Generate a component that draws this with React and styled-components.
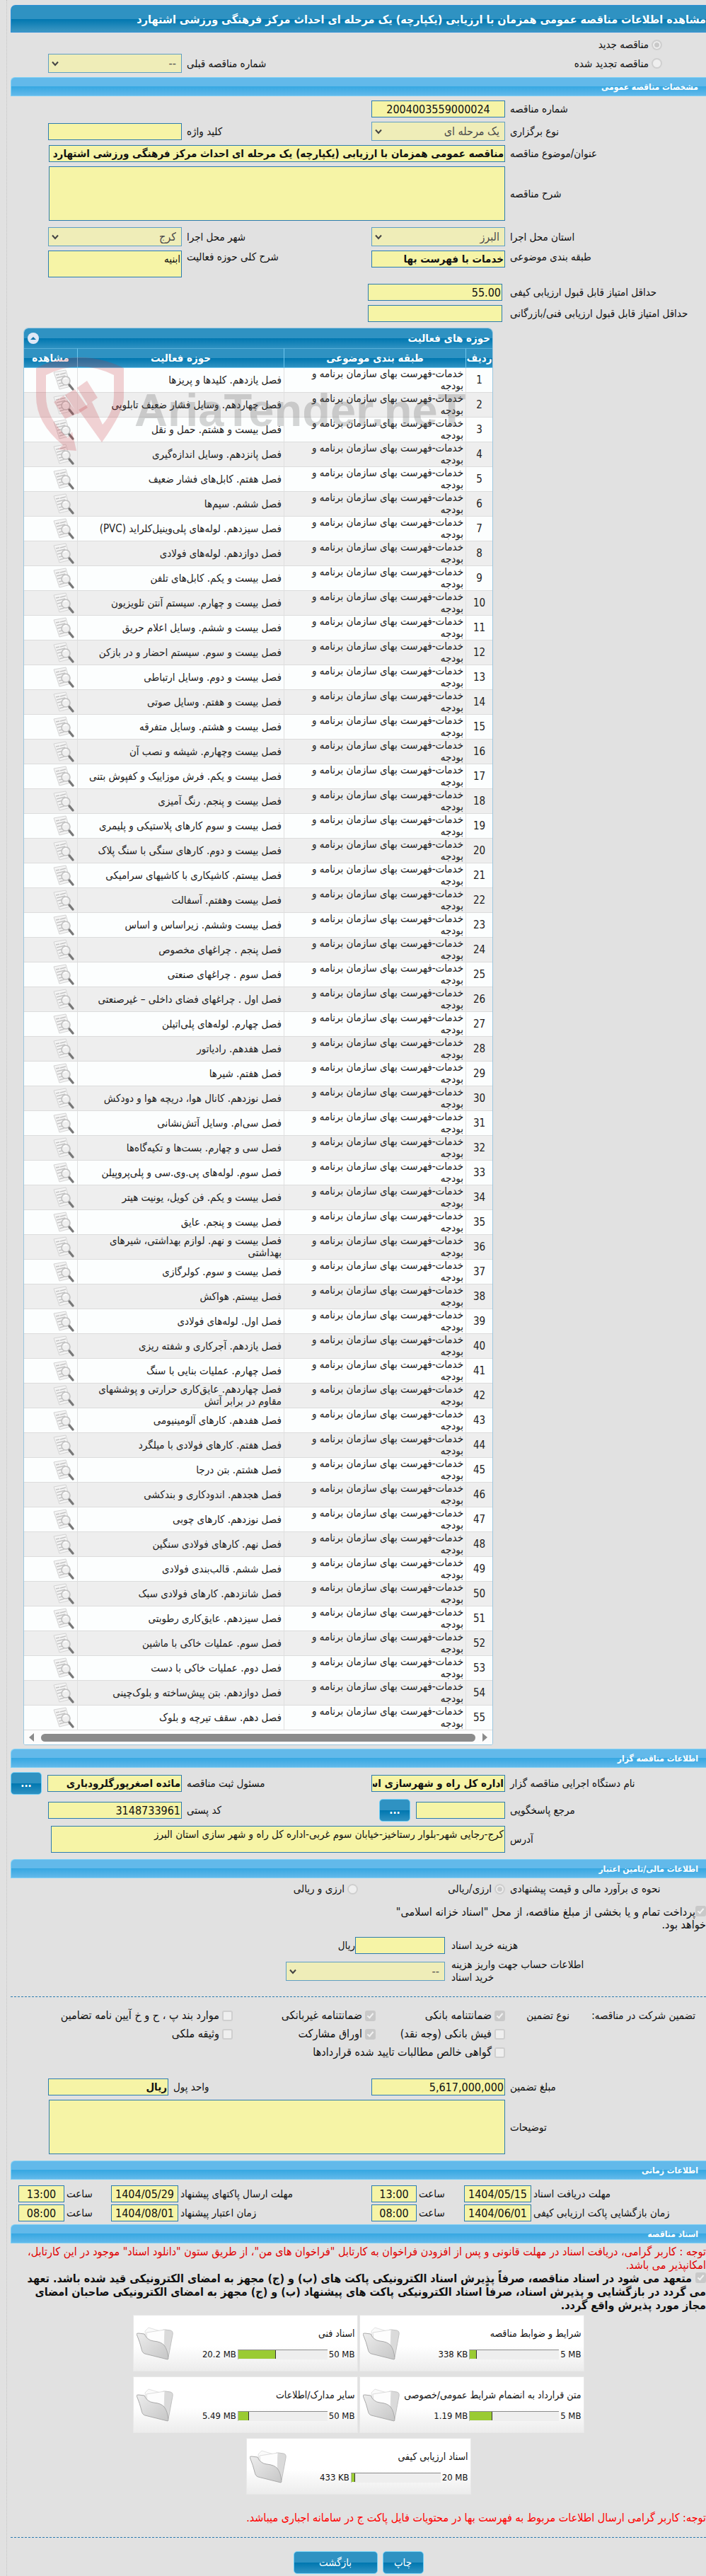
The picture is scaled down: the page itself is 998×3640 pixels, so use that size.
import React from 'react';
import styled, { createGlobalStyle, css } from 'styled-components';

const Global = createGlobalStyle`
  *, *::before, *::after { box-sizing: border-box; }
  body {
    margin: 0;
    background: #e1e1e1;
    color: #111;
    font: 15px/18px "DejaVu Sans Condensed", "DejaVu Sans", Tahoma, sans-serif;
  }
  input, select, textarea, button { font-family: inherit; margin: 0; }
`;

const Page = styled.main`
  direction: rtl;
  margin-left: 9px;
  padding: 7px 0 5px 5px;
  border-left: 1px dotted #c4c4c4;
  overflow: hidden;
`;

const TitleBar = styled.h1`
  margin: 0 0 8px;
  height: 39px;
  font-size: 16px;
  line-height: 39px;
  white-space: nowrap;
  color: #fff;
  border: 1px solid #2f8fd6;
  border-right: 0;
  border-top-left-radius: 7px;
  background: linear-gradient(#2f92c2 0 50%, #0077b0 51%, #3d97c3);
`;

const SectionBar = styled.h2`
  margin: 0 0 ${(p) => p.$after ?? 6}px;
  padding: 0 11px;
  height: 27px;
  font-size: 12px;
  line-height: 27px;
  color: #fff;
  border: 1px solid #7fd0f5;
  border-right: 0;
  border-top-left-radius: 6px;
  background: linear-gradient(#62b9ea 0 48%, #37a8e2 50%, #62b9ea);
`;

const Stack = styled.div`
  display: flex;
  flex-direction: column;
  gap: ${(p) => p.$gap ?? 6}px;
  padding-top: ${(p) => p.$before ?? 0}px;
  padding-bottom: ${(p) => p.$after ?? 0}px;
`;

const Row = styled.div`
  display: grid;
  grid-template-columns: 277px 189px 1fr ${(p) => p.$second ?? '189px'};
  column-gap: 7px;
  align-items: ${(p) => p.$align ?? 'center'};
  padding-left: ${(p) => p.$end ?? 53}px;
`;

const WideRow = styled.div`
  display: grid;
  grid-template-columns: 277px 1fr;
  column-gap: 7px;
  align-items: center;
  padding: 0 0 ${(p) => p.$after ?? 0}px ${(p) => p.$end ?? 54}px;
`;

const ScoreRow = styled.div`
  display: grid;
  grid-template-columns: 277px 190px;
  column-gap: 11px;
  align-items: center;
`;

const Label = styled.label`
  text-align: left;
  white-space: nowrap;
`;

const field = css`
  width: 100%;
  border: 1px solid #2c7cb0;
  border-radius: 0;
  background: #f6f4a6;
  color: #111;
  outline: 0;
`;

const Input = styled.input`
  ${field}
  height: 24px;
  padding: 0 1px;
  font-size: ${(p) => (p.$bold ? 15 : 16)}px;
  font-weight: ${(p) => (p.$bold ? 700 : 400)};
  text-align: ${(p) => p.$align ?? 'right'};
`;

const RefInput = styled(Input)`
  width: 126px;
`;

const Area = styled.textarea`
  ${field}
  display: block;
  height: ${(p) => p.$h}px;
  padding: 2px 1px;
  resize: none;
  overflow: hidden;
  font-size: 15px;
  line-height: 18px;
`;

const SelectBox = styled.span`
  position: relative;
  display: block;
  svg { position: absolute; left: 5px; top: 10px; pointer-events: none; }
`;

const NativeSelect = styled.select`
  ${field}
  display: block;
  appearance: none;
  height: 27px;
  padding: 0 7px 0 20px;
  font-size: 16px;
  color: #4c4c4c;
  opacity: 1;
  border-color: #5f9fc4;
  background: #efedb8;
`;

function Select({ id, value }) {
  return (
    <SelectBox>
      <NativeSelect id={id} disabled defaultValue={value}>
        <option>{value}</option>
      </NativeSelect>
      <svg width="10" height="8" viewBox="0 0 10 8">
        <path d="M1 1.5 5 6 9 1.5" fill="none" stroke="#444" strokeWidth="2" />
      </svg>
    </SelectBox>
  );
}

const Radio = styled.input.attrs({ type: 'radio', disabled: true })`
  appearance: none;
  flex: none;
  width: 15px;
  height: 15px;
  border: 2px solid #cfcfcf;
  border-radius: 50%;
  background: #efefef;
  &:checked { background: #c9c9c9; box-shadow: inset 0 0 0 2px #efefef; }
`;

const Tick = styled.input.attrs({ type: 'checkbox', disabled: true })`
  appearance: none;
  flex: none;
  width: 15px;
  height: 15px;
  border: 2px solid #cfcfcf;
  border-radius: 3px;
  background: #efefef;
  vertical-align: -1px;
  &:checked { background: #c9c9c9; border-color: #c9c9c9; }
  &:checked::after {
    content: "";
    display: block;
    width: 5px;
    height: 9px;
    margin-right: 3px;
    border: solid #f2f2f2;
    border-width: 0 2px 2px 0;
    transform: rotate(40deg);
  }
`;

const Choice = styled.label`
  display: flex;
  align-items: center;
  gap: 4px;
  padding-right: ${(p) => p.$indent ?? 0}px;
  white-space: nowrap;
`;

const panelBlue = 'linear-gradient(#2f92c2 0 49%, #0077b0 51%, #2f92c2)';

const GridPanel = styled.section`
  position: relative;
  margin: 8px 301px 5px 18px;
  border: 1px solid #9cc7df;
  border-radius: 7px 7px 3px 3px;
  background: #fcfefe;
  overflow: hidden;
`;

const GridHead = styled.header`
  display: flex;
  justify-content: space-between;
  align-items: center;
  height: 28px;
  padding: 0 3px 0 5px;
  background: ${panelBlue};
  color: #fff;
  font-weight: 700;
`;

const Collapse = styled.button`
  width: 16px;
  height: 16px;
  padding: 0;
  border: 0;
  border-radius: 50%;
  background: #dfe8f6;
  svg { display: block; }
`;

const Grid = styled.table`
  width: 100%;
  table-layout: fixed;
  border-collapse: separate;
  border-spacing: 0;
  line-height: 17px;
  color: #222;
  th {
    height: 28px;
    padding: 0;
    color: #fff;
    border-bottom: 1px solid #6cc6ee;
    border-top: 1px solid #58aed8;
    background: ${panelBlue};
    white-space: nowrap;
  }
  th + th { border-right: 1px solid #6cc6ee; }
  td {
    height: 35px;
    padding: 0 3px;
    border-bottom: 1px solid #dcdcdc;
    vertical-align: middle;
  }
  td + td { border-right: 1px solid #e0e0e0; }
  td:first-child { text-align: center; }
  td:nth-child(2) { padding-left: 24px; }
  td:nth-child(3) { padding-left: 14px; }
  tbody tr:nth-child(even) { background: #eee; }
  svg { display: block; }
`;

const Scroll = styled.div`
  display: flex;
  align-items: center;
  gap: 10px;
  height: 20px;
  padding: 0 7px;
  background: #fcfcfc;
`;

const Thumb = styled.div`
  flex: 1;
  height: 11px;
  border-radius: 6px;
  background: #8b8b8b;
`;

const Watermark = styled.svg`
  position: absolute;
  left: 17px;
  top: 36px;
  pointer-events: none;
`;

const BlueButton = styled.button`
  flex: none;
  width: ${(p) => p.$w}px;
  height: 32px;
  padding: 0;
  border: 1px solid #6fd0f8;
  border-radius: 5px;
  background: ${panelBlue};
  color: #fff;
  font-size: 15px;
  font-weight: ${(p) => (p.$bold ? 700 : 400)};
`;

const WithButton = styled.span`
  display: flex;
  align-items: center;
  gap: 8px;
`;

const Estimate = styled.div`
  display: grid;
  grid-template-columns: 277px 201px auto;
  column-gap: 7px;
  justify-content: start;
  align-items: center;
`;

const Payment = styled.div`
  width: 460px;
  padding: 15px 0 8px;
  font-size: 16px;
`;

const FeeRow = styled.div`
  display: grid;
  grid-template-columns: 212px ${(p) => p.$w}px auto;
  justify-content: start;
  align-items: center;
  padding-right: 157px;
`;

const FeeLabel = styled.label`
  padding-left: 9px;
  text-align: left;
`;

const Dashed = styled.hr`
  height: 0;
  margin: ${(p) => p.$m};
  border: 0;
  border-top: 1px dashed #2c7cb0;
`;

const Guarantee = styled.div`
  display: grid;
  grid-template-columns: 178px 91px 183px 202px auto;
  justify-content: start;
  row-gap: 8px;
  padding-right: 15px;
  white-space: nowrap;
  label { font-size: 16px; }
`;

const Times = styled.div`
  display: grid;
  grid-template-columns: 244px 95px 61px 64px 1fr 95px 60px 65px;
  gap: 3px;
  align-items: center;
  padding: 2px 0 4px 11px;
`;

const Notice = styled.p`
  margin: 0;
  font-size: 16px;
  line-height: 19px;
  color: ${(p) => p.$color ?? '#111'};
  font-weight: ${(p) => (p.$bold ? 700 : 400)};
`;

const Cards = styled.div`
  display: flex;
  flex-wrap: wrap;
  justify-content: center;
  gap: 7px 2px;
  max-width: 650px;
  margin: 4px auto 23px;
`;

const Card = styled.article`
  display: flex;
  align-items: flex-start;
  width: 318px;
  height: 80px;
  padding: 16px 3px 0 4px;
  border: 1px solid #e8e8e8;
  background: linear-gradient(#fff 55%, #ececec);
  font-size: 14px;
  line-height: 18px;
`;

const CardBody = styled.div`
  flex: 1;
  display: flex;
  flex-direction: column;
  gap: 13px;
  white-space: nowrap;
`;

const Meter = styled.div`
  display: flex;
  align-items: center;
  gap: 2px;
  font-size: 13px;
  line-height: 15px;
`;

const Track = styled.div`
  direction: ltr;
  width: 127px;
  height: 14px;
  border-top: 1px solid #8c8c8c;
  border-left: 1px solid #b5b5b5;
  background: #eee;
`;

const Fill = styled.div`
  height: 12px;
  border-right: 1px solid #333;
  background: #9acb33;
`;

const Actions = styled.div`
  display: flex;
  justify-content: center;
  gap: 7px;
`;

function Dots() {
  return <BlueButton type="button" $w={44} $bold>...</BlueButton>;
}

function ViewIcon() {
  return (
    <svg width="31" height="31" viewBox="0 0 31 31">
      <path d="M1 4 18 1l7 23-16 4Q5 15 1 4Z" fill="#f4f4f4" stroke="#d4d4d4" />
      <path d="m4 8 5-1m1 0 8-2M5 12l12-3M6 16l8-2M8 20l6-1M9 24l7-2" stroke="#c4c4c4" strokeWidth="1.4" />
      <circle cx="18" cy="16" r="6" fill="#eee" fillOpacity=".8" stroke="#c2c2c2" strokeWidth="1.6" />
      <path d="M15 14q2-3 5-1" stroke="#fff" strokeWidth="1.5" fill="none" />
      <path d="m23 22 5 6" stroke="#777" strokeWidth="3.4" strokeLinecap="round" />
    </svg>
  );
}

function FolderIcon() {
  return (
    <svg width="54" height="50" viewBox="0 0 54 50">
      <defs>
        <linearGradient id="folder" x1="0" y1="0" x2="1" y2="1">
          <stop offset="0" stopColor="#ededed" />
          <stop offset="1" stopColor="#c6c6c6" />
        </linearGradient>
      </defs>
      <path d="M33 7q4-4 8-3l7 1q4 1 3 6l-6 32-8-8Z" fill="#dadada" stroke="#c2c2c2" />
      <path d="M12 6 17 1l20 6-3 24-20-6Z" fill="#fafafa" stroke="#e2e2e2" />
      <path d="M14 8 40 4l-1 24-23 2Z" fill="#fdfdfd" stroke="#ddd" />
      <path d="M0 10q0-1 3-1l8 1q4 9 13 10 11 1 15 6 5 6 6 19l-1 1L12 38q-4-1-5-7Q5 22 0 10Z" fill="url(#folder)" stroke="#aaa" />
    </svg>
  );
}

function Shield() {
  return (
    <Watermark width="620" height="142" viewBox="0 0 620 142">
      <g fill="#c7323c" fillOpacity=".22">
        <path fillRule="evenodd" d="M0 20Q62-10 124 20V62q0 20-31 63L60 79 79 68l15 32q16-18 16-42V30Q62 6 14 30v30q0 30 31 59l6-9 6 27-26-2 7-6Q0 98 0 60Z" />
        <path d="m58 48 14-10 15 24-14 10ZM41 58l14-8 18 26-14 9Z" />
        <path d="m25 68 14-9 20 25-18 8Z" />
      </g>
      <text x="139" y="102" direction="ltr" fontFamily="'Liberation Sans', Arial, sans-serif" fontWeight="700" fontSize="65" fill="#555" fillOpacity=".24">AriaTender.neT</text>
    </Watermark>
  );
}

const chapters = [
  'فصل یازدهم. کلیدها و پریزها', 'فصل چهاردهم. وسایل فشار ضعیف تابلویی', 'فصل بیست و هشتم. حمل و نقل',
  'فصل پانزدهم. وسایل اندازه‌گیری', 'فصل هفتم. کابل‌های فشار ضعیف', 'فصل ششم. سیم‌ها',
  'فصل سیزدهم. لوله‌های پلی‌وینیل‌کلراید (PVC)', 'فصل دوازدهم. لوله‌های فولادی', 'فصل بیست و یکم. کابل‌های تلفن',
  'فصل بیست و چهارم. سیستم آنتن تلویزیون', 'فصل بیست و ششم. وسایل اعلام حریق', 'فصل بیست و سوم. سیستم احضار و در بازکن',
  'فصل بیست و دوم. وسایل ارتباطی', 'فصل بیست و هفتم. وسایل صوتی', 'فصل بیست و هشتم. وسایل متفرقه',
  'فصل بیست وچهارم. شیشه و نصب آن', 'فصل بیست و یکم. فرش موزاییک و کفپوش بتنی', 'فصل بیست و پنجم. رنگ آمیزی',
  'فصل بیست و سوم کارهای پلاستیکی و پلیمری', 'فصل بیست و دوم. کارهای سنگی با سنگ پلاک', 'فصل بیستم. کاشیکاری با کاشیهای سرامیکی',
  'فصل بیست وهفتم. آسفالت', 'فصل بیست وششم. زیراساس و اساس', 'فصل پنجم . چراغهای مخصوص',
  'فصل سوم . چراغهای صنعتی', 'فصل اول . چراغهای فضای داخلی – غیرصنعتی', 'فصل چهارم. لوله‌های پلی‌اتیلن',
  'فصل هفدهم. رادیاتور', 'فصل هفتم. شیرها', 'فصل نوزدهم. کانال هوا، دریچه هوا و دودکش',
  'فصل سی‌ام. وسایل آتش‌نشانی', 'فصل سی و چهارم. بست‌ها و تکیه‌گاه‌ها', 'فصل سوم. لوله‌های پی.وی.سی و پلی‌پروپیلن',
  'فصل بیست و یکم. فن کویل، یونیت هیتر', 'فصل بیست و پنجم. عایق', 'فصل بیست و نهم. لوازم بهداشتی، شیرهای بهداشتی',
  'فصل بیست و سوم. کولرگازی', 'فصل بیستم. هواکش', 'فصل اول. لوله‌های فولادی',
  'فصل یازدهم. آجرکاری و شفته ریزی', 'فصل چهارم. عملیات بنایی با سنگ', 'فصل چهاردهم. عایق‌کاری حرارتی و پوششهای مقاوم در برابر آتش',
  'فصل هفدهم. کارهای آلومینیومی', 'فصل هفتم. کارهای فولادی با میلگرد', 'فصل هشتم. بتن درجا',
  'فصل هجدهم. اندودکاری و بندکشی', 'فصل نوزدهم. کارهای چوبی', 'فصل نهم. کارهای فولادی سنگین',
  'فصل ششم. قالب‌بندی فولادی', 'فصل شانزدهم. کارهای فولادی سبک', 'فصل سیزدهم. عایق‌کاری رطوبتی',
  'فصل سوم. عملیات خاکی با ماشین', 'فصل دوم. عملیات خاکی با دست', 'فصل دوازدهم. بتن پیش‌ساخته و بلوک‌چینی',
  'فصل دهم. سقف تیرچه و بلوک',
];

const documents = [
  { title: 'شرایط و ضوابط مناقصه', max: '5 MB', used: '338 KB', share: 8 },
  { title: 'اسناد فنی', max: '50 MB', used: '20.2 MB', share: 42 },
  { title: 'متن قرارداد به انضمام شرایط عمومی/خصوصی', max: '5 MB', used: '1.19 MB', share: 25 },
  { title: 'سایر مدارک/اطلاعات', max: '50 MB', used: '5.49 MB', share: 12 },
  { title: 'اسناد ارزیابی کیفی', max: '20 MB', used: '433 KB', share: 4 },
];

function Activities() {
  return (
    <GridPanel>
      <GridHead>
        <span>حوزه های فعالیت</span>
        <Collapse type="button" aria-label="بستن">
          <svg width="16" height="16" viewBox="0 0 16 16"><path d="m4 10 4-4 4 4Z" fill="#1477ae" /></svg>
        </Collapse>
      </GridHead>
      <Grid>
        <colgroup>
          <col width="37" />
          <col width="257" />
          <col />
          <col width="76" />
        </colgroup>
        <thead>
          <tr>
            <th>ردیف</th>
            <th>طبقه بندی موضوعی</th>
            <th>حوزه فعالیت</th>
            <th>مشاهده</th>
          </tr>
        </thead>
        <tbody>
          {chapters.map((name, i) => (
            <tr key={i}>
              <td>{i + 1}</td>
              <td>خدمات-فهرست بهای سازمان برنامه و بودجه</td>
              <td>{name}</td>
              <td><ViewIcon /></td>
            </tr>
          ))}
        </tbody>
      </Grid>
      <Scroll>
        <svg width="7" height="12" viewBox="0 0 7 12"><path d="m0 0 7 6-7 6Z" fill="#8b8b8b" /></svg>
        <Thumb />
        <svg width="7" height="12" viewBox="0 0 7 12"><path d="M7 0 0 6l7 6Z" fill="#8b8b8b" /></svg>
      </Scroll>
      <Shield />
    </GridPanel>
  );
}

function TimeField({ id, label, date, hour }) {
  return (
    <>
      <Label htmlFor={`${id}-date`}>{label}</Label>
      <Input id={`${id}-date`} $align="center" readOnly value={date} />
      <Label htmlFor={`${id}-hour`}>ساعت</Label>
      <Input id={`${id}-hour`} $align="center" readOnly value={hour} />
    </>
  );
}

export default function App() {
  return (
    <>
      <Global />
      <Page>
        <TitleBar>مشاهده اطلاعات مناقصه عمومی همزمان با ارزیابی (یکپارچه) یک مرحله ای احداث مرکز فرهنگی ورزشی اشتهارد</TitleBar>

        <Stack $gap={4} $after={6}>
          <Choice $indent={62}><Radio name="kind" defaultChecked />مناقصه جدید</Choice>
          <Row>
            <Choice $indent={62}><Radio name="kind" />مناقصه تجدید شده</Choice>
            <span />
            <Label htmlFor="prev">شماره مناقصه قبلی</Label>
            <Select id="prev" value="--" />
          </Row>
        </Stack>

        <SectionBar>مشخصات مناقصه عمومی</SectionBar>
        <Stack>
          <Row>
            <Label htmlFor="no">شماره مناقصه</Label>
            <Input id="no" readOnly value="2004003559000024" $align="center" />
          </Row>
          <Row>
            <Label htmlFor="type">نوع برگزاری</Label>
            <Select id="type" value="یک مرحله ای" />
            <Label htmlFor="keyword">کلید واژه</Label>
            <Input id="keyword" readOnly value="" />
          </Row>
          <WideRow>
            <Label htmlFor="subject">عنوان/موضوع مناقصه</Label>
            <Input id="subject" readOnly $bold value="مناقصه عمومی همزمان با ارزیابی (یکپارچه) یک مرحله ای احداث مرکز فرهنگی ورزشی اشتهارد" />
          </WideRow>
          <WideRow $after={3}>
            <Label htmlFor="desc">شرح مناقصه</Label>
            <Area id="desc" $h={77} readOnly />
          </WideRow>
          <Row>
            <Label htmlFor="province">استان محل اجرا</Label>
            <Select id="province" value="البرز" />
            <Label htmlFor="city">شهر محل اجرا</Label>
            <Select id="city" value="کرج" />
          </Row>
          <Row $align="start">
            <Label htmlFor="class">طبقه بندی موضوعی</Label>
            <Input id="class" readOnly $bold value="خدمات با فهرست بها" />
            <Label htmlFor="scope">شرح کلی حوزه فعالیت</Label>
            <Area id="scope" $h={38} readOnly defaultValue="ابنیه" />
          </Row>
          <Stack $before={3}>
            <ScoreRow>
              <Label htmlFor="quality">حداقل امتیاز قابل قبول ارزیابی کیفی</Label>
              <Input id="quality" readOnly value="55.00" />
            </ScoreRow>
            <ScoreRow>
              <Label htmlFor="technical">حداقل امتیاز قابل قبول ارزیابی فنی/بازرگانی</Label>
              <Input id="technical" readOnly value="" />
            </ScoreRow>
          </Stack>
        </Stack>

        <Activities />

        <SectionBar>اطلاعات مناقصه گزار</SectionBar>
        <Stack $after={9}>
          <Row $end={0} $second="242px">
            <Label htmlFor="org">نام دستگاه اجرایی مناقصه گزار</Label>
            <Input id="org" readOnly $bold value="اداره کل راه و شهرسازی استان البرز" />
            <Label htmlFor="clerk">مسئول ثبت مناقصه</Label>
            <WithButton>
              <Input id="clerk" readOnly $bold value="مائده اصغرپورگلرودباری" />
              <Dots />
            </WithButton>
          </Row>
          <Row>
            <Label htmlFor="ref">مرجع پاسخگویی</Label>
            <WithButton>
              <RefInput id="ref" readOnly value="" />
              <Dots />
            </WithButton>
            <Label htmlFor="zip">کد پستی</Label>
            <Input id="zip" readOnly value="3148733961" />
          </Row>
          <WideRow $end={57}>
            <Label htmlFor="addr">آدرس</Label>
            <Area id="addr" $h={38} readOnly defaultValue="کرج-رجایی شهر-بلوار رستاخیز-خیابان سوم غربی-اداره کل راه و شهر سازی استان البرز" />
          </WideRow>
        </Stack>

        <SectionBar>اطلاعات مالی/تامین اعتبار</SectionBar>
        <Estimate>
          <Label as="span">نحوه ی برآورد مالی و قیمت پیشنهادی</Label>
          <Choice><Radio name="currency" defaultChecked />ارزی/ریالی</Choice>
          <Choice><Radio name="currency" />ارزی و ریالی</Choice>
        </Estimate>
        <Payment>
          <Tick id="treasury" defaultChecked />
          <label htmlFor="treasury">پرداخت تمام و یا بخشی از مبلغ مناقصه، از محل "اسناد خزانه اسلامی" خواهد بود.</label>
        </Payment>
        <Stack>
          <FeeRow $w={127}>
            <FeeLabel htmlFor="fee">هزینه خرید اسناد</FeeLabel>
            <Input id="fee" readOnly value="" />
            <span>ریال</span>
          </FeeRow>
          <FeeRow $w={225}>
            <FeeLabel htmlFor="account">اطلاعات حساب جهت واریز هزینه خرید اسناد</FeeLabel>
            <Select id="account" value="--" />
          </FeeRow>
        </Stack>

        <Dashed $m="18px 0 17px" />

        <Guarantee>
          <span>تضمین شرکت در مناقصه:</span>
          <span>نوع تضمین</span>
          <Choice><Tick defaultChecked />ضمانتنامه بانکی</Choice>
          <Choice><Tick defaultChecked />ضمانتنامه غیربانکی</Choice>
          <Choice><Tick />موارد بند پ ، ح و خ آیین نامه تضامین</Choice>
          <span /><span />
          <Choice><Tick />فیش بانکی (وجه نقد)</Choice>
          <Choice><Tick defaultChecked />اوراق مشارکت</Choice>
          <Choice><Tick />وثیقه ملکی</Choice>
          <span /><span />
          <Choice><Tick />گواهی خالص مطالبات تایید شده قراردادها</Choice>
        </Guarantee>

        <Stack $before={28} $after={6}>
          <Row $second="170px">
            <Label htmlFor="amount">مبلغ تضمین</Label>
            <Input id="amount" readOnly value="5,617,000,000" />
            <Label htmlFor="unit">واحد پول</Label>
            <Input id="unit" readOnly $bold value="ریال" />
          </Row>
          <WideRow $after={3}>
            <Label htmlFor="notes">توضیحات</Label>
            <Area id="notes" $h={77} readOnly />
          </WideRow>
        </Stack>

        <SectionBar>اطلاعات زمانی</SectionBar>
        <Times>
          <TimeField id="documents" label="مهلت دریافت اسناد" date="1404/05/15" hour="13:00" />
          <TimeField id="offers" label="مهلت ارسال پاکتهای پیشنهاد" date="1404/05/29" hour="13:00" />
          <TimeField id="opening" label="زمان بازگشایی پاکت ارزیابی کیفی" date="1404/06/01" hour="08:00" />
          <TimeField id="validity" label="زمان اعتبار پیشنهاد" date="1404/08/01" hour="08:00" />
        </Times>

        <SectionBar $after={2}>اسناد مناقصه</SectionBar>
        <Notice $color="#e00000">توجه : کاربر گرامی، دریافت اسناد در مهلت قانونی و پس از افزودن فراخوان به کارتابل "فراخوان های من"، از طریق ستون "دانلود اسناد" موجود در این کارتابل، امکانپذیر می باشد.</Notice>
        <Notice $bold>
          <Tick id="pledge" defaultChecked />{' '}
          <label htmlFor="pledge">متعهد می شود در اسناد مناقصه، صرفاً پذیرش اسناد الکترونیکی پاکت های (ب) و (ج) مجهز به امضای الکترونیکی قید شده باشد. تعهد می گردد در بازگشایی و پذیرش اسناد، صرفاً اسناد الکترونیکی پاکت های پیشنهاد (ب) و (ج) مجهز به امضای الکترونیکی صاحبان امضای مجاز مورد پذیرش واقع گردد.</label>
        </Notice>

        <Cards>
          {documents.map((d) => (
            <Card key={d.title}>
              <CardBody>
                <span>{d.title}</span>
                <Meter>
                  <span dir="ltr">{d.max}</span>
                  <Track><Fill style={{ width: `${d.share}%` }} /></Track>
                  <span dir="ltr">{d.used}</span>
                </Meter>
              </CardBody>
              <FolderIcon />
            </Card>
          ))}
        </Cards>

        <Notice $color="#f00">توجه: کاربر گرامی ارسال اطلاعات مربوط به فهرست بها در محتویات فایل پاکت ج در سامانه اجباری میباشد.</Notice>
        <Dashed $m="18px 0 19px" />
        <Actions>
          <BlueButton type="button" $w={58}>چاپ</BlueButton>
          <BlueButton type="button" $w={119}>بازگشت</BlueButton>
        </Actions>
      </Page>
    </>
  );
}
